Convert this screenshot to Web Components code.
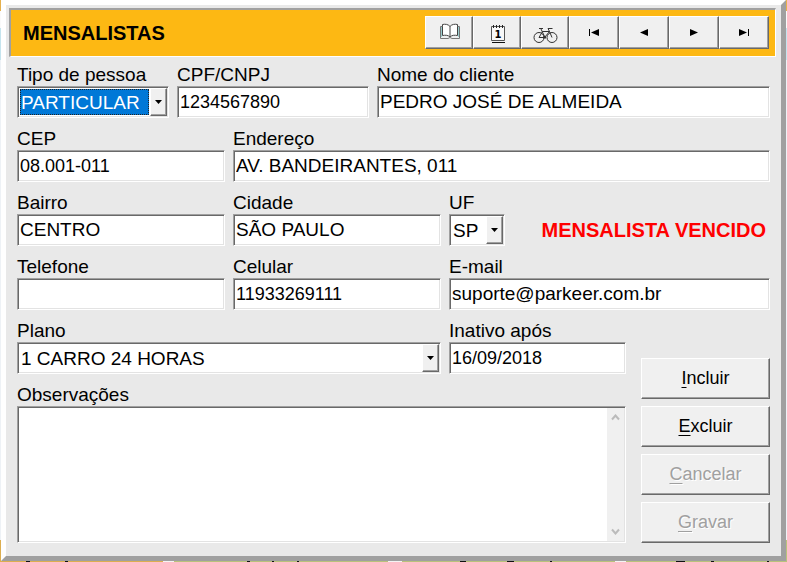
<!doctype html>
<html lang="pt-BR">

<head>
  <meta charset="utf-8">
  <title>Mensalistas</title>
  <style>
    body {
      margin: 0;
      min-height: 100vh;
      font-family: "Liberation Sans", Arial, sans-serif;
      color: #000;
      /* the desktop that shows around the window */
      background:
        linear-gradient(90deg, transparent 26px, #111 26px 30px, transparent 30px 65px, #111 65px 68px, transparent 68px 247px, #111 247px 250px, transparent 250px 272px, #111 272px 274px, transparent 274px 297px, #111 297px 299px, transparent 299px 460px, #111 460px 466px, transparent 466px 507px, #111 507px 514px, transparent 514px 550px, #111 550px 552px, transparent 552px 676px, #111 676px 685px, transparent 685px 711px, #111 711px 714px, transparent 714px 767px, #111 767px 769px, transparent 769px) bottom / 100% 1px no-repeat,
        linear-gradient(90deg, #dcae50 163px, #f4f4f4 163px 174px, #b9c27c 174px 388px, #f4f4f4 388px 402px, #b9c27c 402px 615px, #f4f4f4 615px 626px, #b9c27c 626px) bottom / 100% 22px no-repeat,
        linear-gradient(#e5b04c 11px, #fafafa 11px 28px, #c5e4ee 28px 60px, #eef2f6 60px);
    }
  </style>
</head>

<body>

  <app-window>
    <title-bar slot="header" heading="MENSALISTAS">
      <tool-button icon="book" label="Cadastro"></tool-button>
      <tool-button icon="calendar" label="Calendário"></tool-button>
      <tool-button icon="bike" label="Veículos"></tool-button>
      <tool-button icon="first" label="Primeiro" class="wide"></tool-button>
      <tool-button icon="prev" label="Anterior" class="wide"></tool-button>
      <tool-button icon="next" label="Próximo" class="wide"></tool-button>
      <tool-button icon="last" label="Último" class="wide"></tool-button>
    </title-bar>

    <form-row>
      <combo-field label="Tipo de pessoa" value="PARTICULAR" selected style="--grow: 152"></combo-field>
      <text-field label="CPF/CNPJ" value="1234567890" numeric style="--grow: 192"></text-field>
      <text-field label="Nome do cliente" value="PEDRO JOSÉ DE ALMEIDA" style="--grow: 393"></text-field>
    </form-row>

    <form-row>
      <text-field label="CEP" value="08.001-011" numeric style="--grow: 208"></text-field>
      <text-field label="Endereço" value="AV. BANDEIRANTES, 011" style="--grow: 537"></text-field>
    </form-row>

    <form-row>
      <text-field label="Bairro" value="CENTRO" style="--grow: 208"></text-field>
      <text-field label="Cidade" value="SÃO PAULO" style="--grow: 208"></text-field>
      <combo-field label="UF" value="SP" style="--grow: 56"></combo-field>
      <status-message style="--grow: 253">MENSALISTA VENCIDO</status-message>
    </form-row>

    <form-row>
      <text-field label="Telefone" value="" numeric style="--grow: 208"></text-field>
      <text-field label="Celular" value="11933269111" numeric style="--grow: 208"></text-field>
      <text-field label="E-mail" value="suporte@parkeer.com.br" style="--grow: 321"></text-field>
    </form-row>

    <split-row>
      <form-row>
        <combo-field label="Plano" value="1 CARRO 24 HORAS" style="--grow: 424"></combo-field>
        <text-field label="Inativo após" value="16/09/2018" numeric style="--grow: 177"></text-field>
      </form-row>
      <memo-field label="Observações"></memo-field>

      <push-button slot="actions" key="I">ncluir</push-button>
      <push-button slot="actions" key="E">xcluir</push-button>
      <push-button slot="actions" key="C" disabled>ancelar</push-button>
      <push-button slot="actions" key="G" disabled>ravar</push-button>
    </split-row>
  </app-window>

  <script>

    // styles shared by every field
    const fieldStyle = `
      :host { display: block; flex: var(--grow, 1) 1 0; min-width: 0; }
      label { display: block; font-size: 19px; line-height: 22px; white-space: nowrap; }
      .box {
        display: flex;
        box-sizing: border-box;
        height: 32px;
        padding: 1px;
        background: #fff;
        border: 1px solid;
        border-color: #a0a0a0 #fff #fff #a0a0a0;
        box-shadow: inset 1px 1px #696969, inset -1px -1px #e3e3e3;
      }
      input, select, textarea {
        flex: 1;
        min-width: 0;
        box-sizing: border-box;
        margin: 0;
        padding: 0 1px;
        border: 0;
        border-radius: 0;
        outline: 0;
        background: none;
        color: #000;
        font-family: inherit;
        font-size: 19px;
      }
    `;

    const bevel = `
      background: #f0f0f0;
      border: 1px solid;
      border-color: #fff #696969 #696969 #fff;
      border-radius: 0;
      box-shadow: inset -1px -1px #a0a0a0;
    `;

    const icons = {
      book: `<g fill="none" stroke="#444">
          <path d="M16 9.500v10M16 9.500C14 7 11 7 8.500 7.500v11c3-.5 5.500-.5 7.500 1.500 2-2 4.500-2 7.500-1.500v-11C21 7 18 7 16 9.500" fill="#fff"/>
          <path d="M8.500 9.500h-2v12h7.500l2-1 2 1h7.500v-12h-2" stroke="#777"/>
          <path d="M7.500 10v10M24.500 10v10" stroke="#9cc"/>
        </g>`,
      calendar: `<path d="M9.500 9.500h13v14h-13z" fill="#f8f8f8" stroke="#555"/>
        <path d="M10 25.500h13" fill="none" stroke="#111"/>
        <path d="M11.500 8v3M14.500 8v3M17.500 8v3M20.500 8v3" stroke="#222"/>
        <text x="16" y="21" text-anchor="middle" font-family="DejaVu Sans" font-weight="bold" font-size="10">1</text>`,
      bike: `<g fill="none" stroke="#333">
          <circle cx="9" cy="20.500" r="5"/>
          <circle cx="22" cy="20.500" r="5"/>
          <path d="M9 20.500l3.500-6h7l-5 6H9M11 12l4 8.500M19.500 14.500L22 20.500M9 11.500h4M19.500 14.500l-1.500-3h4.500"/>
          <path d="M13 20.500h3" stroke-width="2"/>
        </g>`,
      first: `<path d="M10 12h1v7h-1zM20 12v7l-8-3.500z"/>`,
      prev: `<path d="M19 12v7l-8-3.500z"/>`,
      next: `<path d="M11 12v7l8-3.500z"/>`,
      last: `<path d="M19 12h1v7h-1zM10 12v7l8-3.500z"/>`
    };

    customElements.define('app-window', class extends HTMLElement {
      connectedCallback() {
        this.attachShadow({ mode: 'open' });
        this.shadowRoot.innerHTML = `
          <style>
            :host {
              display: block;
              margin: 0 1px 1px;
              background: #e9e9e9;
              border: 5px solid;
              border-color: #fff #a0a0a0 #a0a0a0 #fff;
            }
            header { padding: 3px 5px 0 3px; }
            main {
              display: flex;
              flex-direction: column;
              gap: 10px;
              padding: 7px 11px 13px;
            }
          </style>
          <header><slot name="header"></slot></header>
          <main><slot></slot></main>`;
      }
    });

    customElements.define('title-bar', class extends HTMLElement {
      connectedCallback() {
        this.attachShadow({ mode: 'open' });
        this.shadowRoot.innerHTML = `
          <style>
            :host {
              display: flex;
              align-items: center;
              justify-content: space-between;
              padding: 6px 6px 7px 12px;
              background: #fdb813;
              border: solid;
              border-width: 2px 1px 1px 2px;
              border-color: #a0a0a0 #fff #fff #a0a0a0;
            }
            h1 { margin: 0; font-size: 20px; line-height: 24px; }
            nav { display: flex; }
          </style>
          <h1>${this.getAttribute('heading')}</h1>
          <nav><slot></slot></nav>`;
      }
    });

    customElements.define('tool-button', class extends HTMLElement {
      connectedCallback() {
        this.attachShadow({ mode: 'open' });
        this.shadowRoot.innerHTML = `
          <style>
            :host { display: block; width: 48px; }
            :host(.wide) { width: 50px; }
            button {
              display: flex;
              justify-content: center;
              box-sizing: border-box;
              width: 100%;
              height: 33px;
              padding: 0;
              ${bevel}
            }
            svg { display: block; }
          </style>
          <button type="button" aria-label="${this.getAttribute('label')}">
            <svg width="30" height="30" viewBox="0 0 30 30">${icons[this.getAttribute('icon')]}</svg>
          </button>`;
      }
    });

    customElements.define('form-row', class extends HTMLElement {
      connectedCallback() {
        this.attachShadow({ mode: 'open' });
        this.shadowRoot.innerHTML = `
          <style>:host { display: flex; gap: 8px; }</style>
          <slot></slot>`;
      }
    });

    // fields on the left, a column of buttons on the right
    customElements.define('split-row', class extends HTMLElement {
      connectedCallback() {
        this.attachShadow({ mode: 'open' });
        this.shadowRoot.innerHTML = `
          <style>
            :host { display: flex; gap: 15px; }
            .fields { flex: 1; min-width: 0; display: flex; flex-direction: column; gap: 10px; }
            .actions { width: 129px; display: flex; flex-direction: column; justify-content: flex-end; gap: 7px; }
          </style>
          <div class="fields"><slot></slot></div>
          <div class="actions"><slot name="actions"></slot></div>`;
      }
    });

    customElements.define('text-field', class extends HTMLElement {
      connectedCallback() {
        this.attachShadow({ mode: 'open' });
        this.shadowRoot.innerHTML = `
          <style>
            ${fieldStyle}
            :host([numeric]) input { font-size: 18px; }
          </style>
          <label for="input">${this.getAttribute('label')}</label>
          <div class="box"><input id="input" type="text" value="${this.getAttribute('value')}"></div>`;
      }
    });

    customElements.define('combo-field', class extends HTMLElement {
      connectedCallback() {
        this.attachShadow({ mode: 'open' });
        this.shadowRoot.innerHTML = `
          <style>
            ${fieldStyle}
            select { appearance: none; margin: 1px; }
            :host([selected]) select {
              padding: 0;
              color: #fff;
              background: #0078d7;
              border: 1px dotted #222;
            }
            button {
              display: grid;
              place-items: center;
              width: 17px;
              padding: 0;
              ${bevel}
            }
          </style>
          <label for="select">${this.getAttribute('label')}</label>
          <div class="box">
            <select id="select"><option>${this.getAttribute('value')}</option></select>
            <button type="button" tabindex="-1" aria-label="Abrir lista">
              <svg width="7" height="4" viewBox="0 0 7 4"><path d="M0 0h7L3.500 4z"/></svg>
            </button>
          </div>`;

        const select = this.shadowRoot.querySelector('select');
        this.shadowRoot.querySelector('button').onclick = () => select.showPicker();
      }
    });

    customElements.define('memo-field', class extends HTMLElement {
      connectedCallback() {
        this.attachShadow({ mode: 'open' });
        this.shadowRoot.innerHTML = `
          <style>
            ${fieldStyle}
            :host { flex: none; }
            .box { height: 137px; }
            textarea { resize: none; overflow: hidden; }
            .scroll {
              display: flex;
              flex-direction: column;
              justify-content: space-between;
              align-items: center;
              width: 17px;
              padding: 6px 0;
              box-sizing: border-box;
              background: #f0f0f0;
            }
            path { fill: none; stroke: #bbb; stroke-width: 2; }
          </style>
          <label for="memo">${this.getAttribute('label')}</label>
          <div class="box">
            <textarea id="memo"></textarea>
            <div class="scroll">
              <svg width="9" height="7" viewBox="0 0 9 7"><path d="M1 5.500l3.500-4 3.500 4"/></svg>
              <svg width="9" height="7" viewBox="0 0 9 7"><path d="M1 1.500l3.500 4 3.500-4"/></svg>
            </div>
          </div>`;
      }
    });

    customElements.define('status-message', class extends HTMLElement {
      connectedCallback() {
        this.attachShadow({ mode: 'open' });
        this.shadowRoot.innerHTML = `
          <style>
            :host {
              box-sizing: border-box;
              flex: var(--grow, 1) 1 0;
              align-self: flex-end;
              padding-right: 4px;
              text-align: right;
              font-size: 20px;
              font-weight: bold;
              line-height: 32px;
              white-space: nowrap;
              color: #f00;
            }
          </style>
          <slot></slot>`;
      }
    });

    customElements.define('push-button', class extends HTMLElement {
      connectedCallback() {
        this.attachShadow({ mode: 'open' });
        this.shadowRoot.innerHTML = `
          <style>
            :host { display: block; }
            button {
              display: block;
              box-sizing: border-box;
              width: 100%;
              height: 41px;
              padding: 0;
              font-family: inherit;
              font-size: 18px;
              color: #000;
              ${bevel}
            }
            button:disabled { color: #a0a0a0; text-shadow: 1px 1px #fff; }
            u { text-underline-offset: 3px; }
          </style>
          <button type="button" ${this.hasAttribute('disabled') ? 'disabled' : ''}><u>${this.getAttribute('key')}</u><slot></slot></button>`;
      }
    });

  </script>
</body>

</html>
